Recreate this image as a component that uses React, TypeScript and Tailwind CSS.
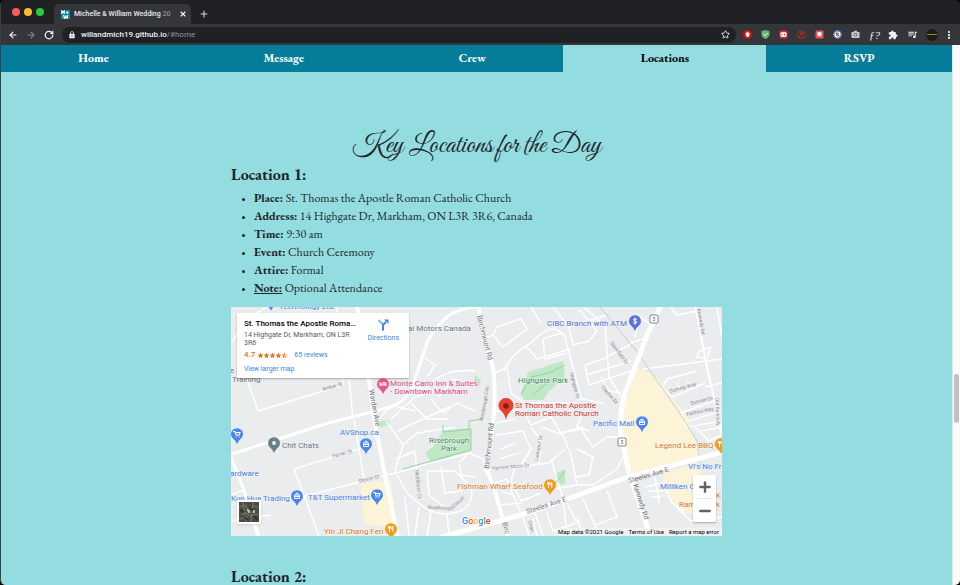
import type { ReactNode } from "react";
import { ArrowLeft, ArrowRight, EllipsisVertical, Minus, Plus, RotateCw, Star, X } from "lucide-react";
import { MdExtension, MdLock, MdQueueMusic, MdStar, MdStarHalf } from "react-icons/md";

const SANS = "font-['Roboto','Liberation_Sans',sans-serif]";
const SERIF = "font-['EB_Garamond','Liberation_Serif',serif]";

/* ---------- Browser chrome ---------- */

function Favicon() {
  return (
    <svg viewBox="0 0 18 18" className="size-[9px] shrink-0" aria-hidden="true">
      <rect width="18" height="18" fill="#0f86a3" />
      <path d="M1.500 8V2l2.500 3 2.500-3v6M10 5h5M12.500 2.500v5M5 10l2 7 2.500-5 2.500 5 2-7" fill="none" stroke="#fff" strokeWidth="2.200" />
    </svg>
  );
}

function TabStrip() {
  return (
    <div className="flex h-6 items-end bg-[#202124] pl-[11px]">
      <div className="flex h-6 items-center gap-1">
        <span className="size-2 rounded-full bg-[#fc5b57]" />
        <span className="size-2 rounded-full bg-[#fdbb2f]" />
        <span className="size-2 rounded-full bg-[#28cb42]" />
      </div>
      <div className="ml-[10px] flex h-5 w-[137px] items-center rounded-t-[5px] bg-[#35363a] pr-1 pl-[7px]">
        <Favicon />
        <span className="ml-1 flex-1 text-[7px] leading-4 font-medium whitespace-nowrap text-[#e8eaed]">
          Michelle &amp; William Wedding <span className="text-[#8d8f93]">20</span>
        </span>
        <button aria-label="Close tab" className="text-[#f1f3f4]">
          <X className="size-2" strokeWidth={3.5} />
        </button>
      </div>
      <button aria-label="New tab" className="ml-2 flex h-5 items-center text-[#d5d7da]">
        <Plus className="size-[10px]" strokeWidth={2.6} />
      </button>
    </div>
  );
}

const extensions: { name: string; icon: ReactNode }[] = [
  {
    name: "Content blocker",
    icon: (
      <>
        <path d="M5 1h8l4 4v8l-4 4H5l-4-4V5z" fill="#f00c0c" />
        <path d="M5.500 10V6H7V4.500h1.500V3.500H10v1h1.500V6H13v4l-2 4H8z" fill="#fff" />
      </>
    ),
  },
  {
    name: "Privacy shield",
    icon: (
      <>
        <path d="M9 0l8 2.500V8c0 5-3.500 8-8 10C4.500 16 1 13 1 8V2.500z" fill="#5fb96f" />
        <path d="M5 8.500l3 3 5-5.500" fill="none" stroke="#fff" strokeWidth="2" />
      </>
    ),
  },
  {
    name: "Reader",
    icon: (
      <>
        <rect x="1" y="1" width="16" height="16" rx="3" fill="#d92b30" />
        <rect x="3" y="4.500" width="12" height="9" rx="2" fill="#fff" />
        <path d="M5 6.500l3 2.500-3 2.500zM10 6.500l3 2.500-3 2.500z" fill="#d92b30" />
      </>
    ),
  },
  {
    name: "Tracker",
    icon: (
      <>
        <circle cx="9" cy="9" r="7.500" fill="#4a2023" stroke="#a33a36" strokeWidth="1.800" />
        <path d="M4 13L14 5M5 6l3 1M10 12l3 1M9 4v3" stroke="#b8443f" strokeWidth="1.800" />
      </>
    ),
  },
  {
    name: "Pocket",
    icon: (
      <>
        <rect x="1" y="1" width="16" height="16" rx="2.500" fill="#ee5055" />
        <path d="M5 4.500h8V9a4 4 0 0 1-8 0z" fill="#fff" />
      </>
    ),
  },
  {
    name: "Script blocker",
    icon: (
      <>
        <circle cx="9" cy="9" r="7.500" fill="#fff" stroke="#477cb5" strokeWidth="2.600" />
        <path d="M5.500 5.500l7 7" stroke="#c23944" strokeWidth="2.600" />
        <path d="M8 5l4 3M6 10l3 3" stroke="#30517c" strokeWidth="1.600" />
      </>
    ),
  },
];

function Toolbar() {
  return (
    <div className="flex h-[21px] items-center bg-[#35363a] pr-[6px] pl-[7px] text-[#f1f3f4]">
      <div className="flex shrink-0 items-center gap-2">
        <button aria-label="Back">
          <ArrowLeft className="size-[10px]" strokeWidth={2.8} />
        </button>
        <button aria-label="Forward" className="text-[#85878b]">
          <ArrowRight className="size-[10px]" strokeWidth={2.8} />
        </button>
        <button aria-label="Reload">
          <RotateCw className="size-[10px]" strokeWidth={3} />
        </button>
      </div>
      <div className="ml-2 flex h-4 min-w-0 flex-1 items-center rounded-full bg-[#202124] px-[6px]">
        <MdLock className="size-2 shrink-0" />
        <a href="#home" className="ml-[5px] flex-1 text-[8px] leading-4 font-medium">
          willandmich19.github.io<span className="font-normal text-[#93969a]">/#home</span>
        </a>
        <button aria-label="Bookmark this page">
          <Star className="size-[9px]" strokeWidth={2.4} />
        </button>
      </div>
      <div className="ml-[7px] flex shrink-0 items-center gap-[9px]">
        {extensions.map((e) => (
          <button key={e.name} aria-label={e.name}>
            <svg viewBox="0 0 18 18" className="size-[9px]">{e.icon}</svg>
          </button>
        ))}
        <button aria-label="Screenshot" className="text-[#c4c6c9]">
          <svg viewBox="0 0 18 18" className="size-[9px]">
            <path d="M1 4h4l1.500-2.500h5L13 4h4v12H1z" fill="currentColor" />
            <circle cx="9" cy="9.500" r="3.600" fill="#55575b" />
            <circle cx="9" cy="9.500" r="1.800" fill="#e8eaed" />
          </svg>
        </button>
        <button className="w-[10px] font-['Liberation_Serif',serif] text-[11px] leading-3 text-[#f1f3f4] italic">ƒ?</button>
        <button aria-label="Extensions">
          <MdExtension className="size-[10px]" />
        </button>
        <button aria-label="Media">
          <MdQueueMusic className="size-[11px]" />
        </button>
        <button aria-label="Profile" className="-ml-px flex size-3 items-center rounded-full bg-[#1c1c1c] px-px">
          <span className="h-px w-full bg-[#a58a18]" />
        </button>
        <button aria-label="Menu" className="-ml-[3px]">
          <EllipsisVertical className="size-[10px]" strokeWidth={3.4} />
        </button>
      </div>
    </div>
  );
}

/* ---------- Map ---------- */

const minorRoads = [
  "M-2 38L22 8L40 -2", "M0 62L14 66L27 104L112 78", "M112 78L106 0", "M118 72L122 112",
  "M63 162L88 229", "M63 162L128 142", "M123 112L133 172", "M70 190L172 164", "M0 188L12 183",
  "M190 48L204 58L196 70M181 80L206 84", "M194 82Q212 60 244 64M208 90L222 72L244 78M200 92L212 106L226 96L244 104",
  "M180 96L196 112L218 112", "M150 110L160 98L184 104", "M248 34L262 28L272 40L296 22L290 12L266 20L262 28",
  "M274 64Q276 50 300 36Q322 12 334 30Q342 60 350 92L372 96", "M264 66L276 60L280 86L294 96L346 96M296 40L306 52L340 42",
  "M312 32L330 26M312 32L314 52L336 46", "M322 0L338 20L342 38L358 34L366 24L348 2M350 -2L374 18L378 70L396 100",
  "M354 58L372 52L402 36M354 58L358 78L400 64M356 68L400 54M370 70L378 84L390 86", "M338 20L376 8M300 0L310 16",
  "M264 104L292 104L300 118L320 110L330 126L352 120M266 116L284 112", "M352 104L346 120L358 124",
  "M430 82L442 90L474 76M430 82L436 72L466 64M446 76L450 84M456 74L460 80",
  "M450 106L488 92M452 116L490 104M450 106L456 120L491 114", "M466 50L476 52L480 40L468 44z M474 80L491 76",
  "M412 62L491 52", "M418 16L408 10L404 30", "M412 32L398 36",
  "M155 114L172 138L164 164L176 186L190 198Q208 212 230 204Q244 196 240 180L224 164L196 164",
  "M160 112L184 90L206 84M166 124L192 112L218 100M172 138L186 126L224 120M165 152L184 144L188 190",
  "M196 164L198 188L216 202M210 160L214 186L232 184", "M228 156L238 146L252 152L254 166M228 158L230 168L244 170",
  "M172 164L200 156L240 146", "M174 190L178 229M184 229L188 200M200 206L196 229M216 206L218 229",
  "M256 163L284 160L318 156L334 142", "M265 128L292 124L300 142L290 158M270 142L284 136M268 152L288 146",
  "M300 120L310 134L308 158M310 120L332 128L340 148L346 178L324 182",
  "M330 126L350 122L362 140L376 130L390 130M346 142L362 150L358 168L344 170",
  "M346 178L362 178L386 162L392 150", "M320 152L326 172L332 192L336 229", "M284 160L280 174L290 194L310 186",
  "M270 184L282 188L290 206M268 198L290 196", "M292 210L298 229M304 206L312 229M316 206L322 224L346 216L336 196",
  "M352 192L364 218L386 210L376 184M336 224L346 229",
  "M302 212L306 229M346 210L352 229M364 218L368 229", "M264 176L276 172L282 188",
  "M414 180L432 176L440 194L452 204M418 184L432 184M420 190L430 190M424 170L428 196", "M440 194L460 214L491 210",
  "M470 124L491 120M464 120L478 134L491 128M486 0L491 30", "M440 0L446 8L466 4", "M0 214L40 208M12 183L26 229",
];

const majorRoads: { d: string; w: number }[] = [
  { d: "M244 0Q226 2 216 10Q202 22 196 36L182 78Q178 92 160 100L94 117L-2 148", w: 3 },
  { d: "M-2 146L8 170L14 186L28 229", w: 3 },
  { d: "M126 -2L138 74L143 112L156 178L167 231", w: 4 },
  { d: "M247 -2Q252 30 262 60Q266 90 261 124L256 163L264 184L277 231", w: 4 },
  { d: "M208 231L300 205L397 170L492 145", w: 5 },
  { d: "M430 -2L417 26L394 86Q388 106 390 128L398 166L420 231", w: 5 },
  { d: "M464 -2L476 60L486 104L491 128", w: 2 },
];

const BLUE = "#3f80e8";
const ORANGE = "#d87a1d";
const SLATE = "#64767f";

const placeLabels: { x: number; y: number; text: string; fill: string }[] = [
  { x: 48, y: 2, text: "Technology Ltd", fill: BLUE },
  { x: 177, y: 24, text: "al Motors Canada", fill: SLATE },
  { x: -1, y: 66, text: "e F", fill: SLATE },
  { x: 1, y: 75, text: "Training", fill: SLATE },
  { x: 159, y: 79, text: "Monte Carlo Inn & Suites", fill: "#e0447f" },
  { x: 159, y: 87, text: "- Downtown Markham", fill: "#e0447f" },
  { x: 316, y: 19, text: "CIBC Branch with ATM", fill: "#5470cf" },
  { x: 287, y: 76, text: "Highgate Park", fill: "#3a8a5a" },
  { x: 284, y: 101, text: "St Thomas the Apostle", fill: "#c9322e" },
  { x: 284, y: 109, text: "Roman Catholic Church", fill: "#c9322e" },
  { x: 362, y: 119, text: "Pacific Mall", fill: BLUE },
  { x: 424, y: 141, text: "Legend Lee BBQ", fill: ORANGE },
  { x: 457, y: 162, text: "Vi's No Fr", fill: BLUE },
  { x: 429, y: 182, text: "Milliken G", fill: BLUE },
  { x: 448, y: 200, text: "Ram", fill: ORANGE },
  { x: 485, y: 191, text: "K", fill: ORANGE },
  { x: 485, y: 200, text: "k", fill: ORANGE },
  { x: 226, y: 182, text: "Fishman Wharf Seafood", fill: ORANGE },
  { x: 109, y: 128, text: "AVShop.ca", fill: BLUE },
  { x: 51, y: 141, text: "Chit Chats", fill: SLATE },
  { x: -1, y: 169, text: "ardware", fill: BLUE },
  { x: 0, y: 194, text: "Kun Hua Trading", fill: BLUE },
  { x: 77, y: 193, text: "T&T Supermarket", fill: BLUE },
  { x: 198, y: 136, text: "Risebrough", fill: "#3a8a5a" },
  { x: 210, y: 144, text: "Park", fill: "#3a8a5a" },
  { x: 93, y: 227, text: "Yin Ji Chang Fen", fill: ORANGE },
];

const roadLabels: { x: number; y: number; angle: number; text: string; big?: boolean }[] = [
  { x: 246, y: 9, angle: 76, text: "Birchmount Rd", big: true },
  { x: 138, y: 83, angle: 80, text: "Warden Ave", big: true },
  { x: 258, y: 162, angle: -84, text: "Birchmount Rd", big: true },
  { x: 296, y: 207, angle: -18, text: "Steeles Ave E", big: true },
  { x: 398, y: 176, angle: -16, text: "Steeles Ave E", big: true },
  { x: 402, y: 178, angle: 72, text: "Kennedy Rd", big: true },
  { x: 271, y: 216, angle: 74, text: "Birc", big: true },
  { x: 466, y: 2, angle: 80, text: "Kennedy Rd" },
  { x: 484, y: 91, angle: 86, text: "Old Kennedy" },
  { x: 92, y: 84, angle: -16, text: "Amber St" },
  { x: 102, y: 151, angle: -16, text: "Ferrier St" },
  { x: 128, y: 176, angle: -14, text: "Gibson Dr" },
  { x: 379, y: 36, angle: 54, text: "Saintfield Dr" },
  { x: 339, y: 66, angle: 76, text: "Highgate Dr" },
  { x: 370, y: 80, angle: 50, text: "Clayton Dr" },
  { x: 439, y: 86, angle: -16, text: "Comely Way" },
  { x: 460, y: 98, angle: -14, text: "Sunrise Dr" },
  { x: 456, y: 109, angle: -12, text: "Faithful Way" },
  { x: 261, y: 163, angle: -5, text: "Harvest Moon Dr" },
  { x: 307, y: 154, angle: -80, text: "Larkspur Dr" },
  { x: 184, y: 163, angle: 84, text: "Middleton Ct" },
  { x: 197, y: 202, angle: 2, text: "Risebrough" },
  { x: 223, y: 201, angle: -42, text: "Circuit" },
  { x: 252, y: 114, angle: -80, text: "Risebrough Circ" },
  { x: 297, y: 214, angle: 76, text: "Chan" },
];

type Glyph = "cart" | "bag" | "food" | "dollar" | "bed" | "dot";
const pins: { x: number; y: number; fill: string; glyph: Glyph }[] = [
  { x: 152, y: 77, fill: "#ec5490", glyph: "bed" },
  { x: 404, y: 14, fill: "#5b70d8", glyph: "dollar" },
  { x: 411, y: 115, fill: "#4a86f2", glyph: "bag" },
  { x: 490, y: 137, fill: "#f29a1b", glyph: "food" },
  { x: 319, y: 178, fill: "#f29a1b", glyph: "food" },
  { x: 135, y: 137, fill: "#4a86f2", glyph: "bag" },
  { x: 43, y: 136, fill: "#6b7f8a", glyph: "dot" },
  { x: 6, y: 127, fill: "#4a86f2", glyph: "cart" },
  { x: 66, y: 189, fill: "#4a86f2", glyph: "bag" },
  { x: 146, y: 188, fill: "#4a86f2", glyph: "cart" },
  { x: 160, y: 222, fill: "#f29a1b", glyph: "food" },
  { x: 40, y: -6, fill: "#4a86f2", glyph: "dot" },
];

function PinGlyph({ glyph }: { glyph: Glyph }) {
  switch (glyph) {
    case "cart":
      return <path d="M-3.500 -2.500h1.500l1 3.500h3l1-2.500h-4.500M-1 2.700h.1M2 2.700h.1" fill="none" stroke="#fff" strokeWidth="1.100" strokeLinecap="round" />;
    case "bag":
      return <path d="M-2.500 -1h5v3.500h-5zM-1.300 -1v-.6a1.300 1.300 0 0 1 2.600 0v.6M-2.500 .5h5" fill="none" stroke="#fff" strokeWidth="1" />;
    case "food":
      return <path d="M-1.500 -3v6M-2.600 -3v2.200h2.200v-2.200M1.800 3v-6q-1.300 1-1 3.200h1" fill="none" stroke="#fff" strokeWidth=".9" />;
    case "dollar":
      return <path d="M1.800 -1.600q-1.800-1.300-3.200-.3q-1 1.300 1.400 1.900q2.500 .6 1.600 1.900q-1.500 1-3.400-.2M0 -3.500v7" fill="none" stroke="#fff" strokeWidth="1" />;
    case "bed":
      return <path d="M-3 -2v4M-3 1h6v1M-2.400 0h5.400v1M-.5 -1.400h3.200V0" fill="none" stroke="#fff" strokeWidth="1" />;
    case "dot":
      return <circle r="1.900" fill="#fff" />;
  }
}

function MapDrawing() {
  return (
    <svg
      viewBox="0 0 491 229"
      preserveAspectRatio="xMidYMid slice"
      className={`block h-auto w-full bg-[#ebecee] ${SANS}`}
      role="img"
      aria-label="Map around St. Thomas the Apostle Roman Catholic Church"
    >
      <path d="M406 61L418 66L426 71L457 111L470 148L398 167L391 140L390 108z" fill="#fdf3d6" />
      <path d="M432 166L468 156L478 190L470 206L448 206L444 194L434 186z" fill="#fdf3d6" />
      <path d="M130 176L160 174L166 220L133 218z" fill="#fdf3d6" />
      <path d="M297 65L332 54L334 70L318 84L312 93L293 93L290 86z" fill="#bfe8c4" />
      <path d="M212 124L240 121L240 143L212 152L200 155L194 146L202 140z" fill="#bfe8c4" />
      <path d="M324 167L334 162L334 177L326 177z" fill="#bfe8c4" />
      <path d="M148 114L158 113L158 118L148 120z" fill="#bfe8c4" />
      <path d="M244 68L250 74L248 80L242 78z" fill="#bfe8c4" />
      {minorRoads.map((d) => (
        <path key={d} d={d} fill="none" stroke="#fff" strokeWidth="1.500" strokeLinejoin="round" />
      ))}
      <path d="M290 88L300 70L318 66L334 58M302 88L316 76M172 162L200 154L240 143V122L212 125V118M238 122V114L252 112M324 177L334 164" fill="none" stroke="#8fcfa0" strokeWidth=".9" />
      <path d="M369 0L404 42L422 68L452 111L466 134L470 160" fill="none" stroke="#d3d5d8" strokeWidth="1.200" />
      {majorRoads.map((r) => (
        <path key={r.d} d={r.d} fill="none" stroke="#fff" strokeWidth={r.w} strokeLinejoin="round" />
      ))}
      {roadLabels.map((l, i) => (
        <text key={i} transform={`translate(${l.x} ${l.y}) rotate(${l.angle})`} fontSize={l.big ? 7 : 5} fill={l.big ? "#6d7276" : "#85898d"}>
          {l.text}
        </text>
      ))}
      {[{ x: 423, y: 12 }, { x: 391, y: 135 }].map((s) => (
        <g key={s.x} transform={`translate(${s.x} ${s.y})`}>
          <rect x="-4" y="-4" width="8" height="8" rx="1" fill="#fff" stroke="#777c80" strokeWidth=".9" />
          <text y="2" fontSize="5" textAnchor="middle" fill="#4b4f52">3</text>
        </g>
      ))}
      {placeLabels.map((l, i) => (
        <text key={i} x={l.x} y={l.y} fontSize="8" fill={l.fill} stroke="#f4f5f6" strokeWidth="1" paintOrder="stroke">
          {l.text}
        </text>
      ))}
      {pins.map((p, i) => (
        <g key={i} transform={`translate(${p.x} ${p.y})`}>
          <path d="M0 10Q-1 7-3.500 5A6 6 0 1 1 3.500 5Q1 7 0 10z" fill={p.fill} />
          <PinGlyph glyph={p.glyph} />
        </g>
      ))}
      <g transform="translate(275 99)">
        <path d="M0 14Q-1 8-4.500 5.500A7.500 7.500 0 1 1 4.500 5.500Q1 8 0 14z" fill="#e8402f" />
        <circle r="2.800" fill="#8c1a14" />
      </g>
      <text x="231" y="217" fontSize="9" fontWeight="500" stroke="#fff" strokeWidth="1.500" paintOrder="stroke">
        <tspan fill="#4285f4">G</tspan>
        <tspan fill="#ea4335">o</tspan>
        <tspan fill="#fbbc05">o</tspan>
        <tspan fill="#4285f4">g</tspan>
        <tspan fill="#34a853">l</tspan>
        <tspan fill="#ea4335">e</tspan>
      </text>
    </svg>
  );
}

function PlaceCard() {
  return (
    <div className="absolute top-[6px] left-[6px] flex w-[172px] justify-between rounded-[1px] bg-white pt-[6px] pr-[10px] pb-1 pl-[7px] shadow-[0_1px_2px_rgba(0,0,0,0.3)]">
      <div className="w-[118px]">
        <p className="text-[8px] leading-[9px] font-medium whitespace-nowrap text-black">St. Thomas the Apostle Roma…</p>
        <p className="mt-[3px] text-[7px] leading-2 text-[#5b5b5b]">14 Highgate Dr, Markham, ON L3R 3R6</p>
        <div className="mt-[2px] flex items-center text-[8px] leading-3 text-[#e7711b]">
          <span className="font-medium">4.7</span>
          <span className="ml-[2px] flex">
            {[0, 1, 2, 3].map((n) => (
              <MdStar key={n} className="-mr-px size-[7px]" />
            ))}
            <MdStarHalf className="size-[7px]" />
          </span>
          <a href="#reviews" className="ml-[6px] text-[7px] text-[#3a84df]">65 reviews</a>
        </div>
        <a href="#larger-map" className="mt-[3px] block text-[7px] leading-[10px] text-[#3a84df]">View larger map</a>
      </div>
      <a href="#directions" className="flex flex-col items-center text-[7px] leading-[9px] text-[#3a84df]">
        <svg viewBox="0 0 22 24" className="h-3 w-[11px]" aria-hidden="true">
          <path d="M1 2l9 9v12" fill="none" stroke="#8ab4f0" strokeWidth="4" />
          <path d="M10 23V12l6-6" fill="none" stroke="#3f87e5" strokeWidth="4" />
          <path d="M12 1h9v9z" fill="#3f87e5" />
        </svg>
        <span className="mt-[3px]">Directions</span>
      </a>
    </div>
  );
}

function LocationMap() {
  return (
    <div className={`relative overflow-hidden ${SANS}`}>
      <MapDrawing />
      <PlaceCard />
      <button aria-label="Satellite view" className="absolute bottom-3 left-[6px] size-6 border-2 border-white bg-[#4b4d40] shadow-sm">
        <svg viewBox="0 0 20 20" className="size-full" aria-hidden="true">
          <path d="M0 5l6-2 3 4 6-3 5 2M2 12l5-1 4 3 8-2M4 0l3 20M14 0l-2 20M0 17l9-2" stroke="#6d6b62" strokeWidth="1.500" fill="none" />
          <path d="M1 8l4 2M10 5l5 4M5 15l4 3M15 14l4 4" stroke="#2e3b2a" strokeWidth="2" />
          <path d="M8 8l2 1v2M15 8v3" stroke="#dde0da" strokeWidth="1.500" fill="none" />
        </svg>
      </button>
      <div className="absolute right-[6px] bottom-[14px] flex w-[23px] flex-col items-center rounded-[1px] bg-white text-[#5f6368] shadow-[0_1px_2px_rgba(0,0,0,0.3)]">
        <button aria-label="Zoom in" className="flex h-[23px] items-center">
          <Plus className="size-4" strokeWidth={3.6} />
        </button>
        <span className="h-px w-4 bg-[#e6e6e6]" />
        <button aria-label="Zoom out" className="flex h-[23px] items-center">
          <Minus className="size-4" strokeWidth={3.6} />
        </button>
      </div>
      <div className="absolute right-0 bottom-0 flex gap-[5px] bg-[#f3f3f4]/80 px-[3px] text-[6px] leading-2 text-black">
        <span>Map data ©2021 Google</span>
        <a href="#terms">Terms of Use</a>
        <a href="#report">Report a map error</a>
      </div>
    </div>
  );
}

/* ---------- Wedding page ---------- */

const navItems = ["Home", "Message", "Crew", "Locations", "RSVP"];

const details: { label: string; value: string; underline?: boolean }[] = [
  { label: "Place:", value: "St. Thomas the Apostle Roman Catholic Church" },
  { label: "Address:", value: "14 Highgate Dr, Markham, ON L3R 3R6, Canada" },
  { label: "Time:", value: "9:30 am" },
  { label: "Event:", value: "Church Ceremony" },
  { label: "Attire:", value: "Formal" },
  { label: "Note:", value: "Optional Attendance", underline: true },
];

function SiteNav() {
  return (
    <nav className="flex">
      {navItems.map((item) => (
        <a
          key={item}
          href={`#${item.toLowerCase()}`}
          className={`flex-auto text-center text-[12px] leading-[27px] font-bold ${
            item === "Locations" ? "bg-[#93dde0] text-black" : "bg-[#067c9b] text-white"
          }`}
        >
          {item}
        </a>
      ))}
    </nav>
  );
}

export default function App() {
  return (
    <div className="h-screen bg-black">
      <div className={`flex h-full flex-col overflow-hidden rounded-[5px] border-l border-[#3c4043] bg-[#202124] ${SANS}`}>
        <TabStrip />
        <Toolbar />
        <div className="flex min-h-0 flex-1">
          <div className={`min-w-0 flex-1 overflow-hidden bg-[#93dde0] text-[#212529] ${SERIF}`}>
            <SiteNav />
            <main className="mx-auto max-w-[491px] pt-14">
              <h1 className="text-center font-['Great_Vibes','Liberation_Serif',serif] text-[28px] leading-[35px]">
                Key Locations for the Day
              </h1>
              <section>
                <h2 className="text-[16px] leading-6 font-bold">Location 1:</h2>
                <ul className="mt-[2px] list-disc pl-[23px] text-[12px] leading-[18px] marker:text-[8px]">
                  {details.map((d) => (
                    <li key={d.label}>
                      <strong className={d.underline ? "underline" : ""}>{d.label}</strong> {d.value}
                    </li>
                  ))}
                </ul>
                <div className="mt-[10px]">
                  <LocationMap />
                </div>
              </section>
              <section className="mt-[29px]">
                <h2 className="text-[16px] leading-6 font-bold">Location 2:</h2>
              </section>
            </main>
          </div>
          <div className="w-2 border-l border-[#e4e4e4] bg-[#fafafa] pt-[329px]">
            <div className="mx-px h-[49px] rounded-full bg-[#c1c0c2]" />
          </div>
        </div>
      </div>
    </div>
  );
}
